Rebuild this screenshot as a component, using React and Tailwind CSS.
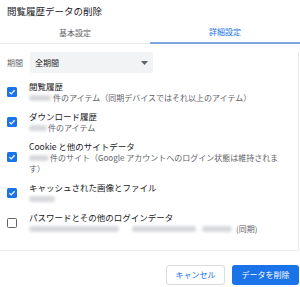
import React from "react";

const font = { fontFamily: '"Noto Sans CJK JP", "Noto Sans", sans-serif' };

const Blur = ({ w }) => (
  <span
    className={`inline-block h-[6px] rounded-full bg-[#d6d8db] blur-[1.5px] align-middle ${w}`}
  />
);

const Check = ({ on }) =>
  on ? (
    <span className="flex items-center justify-center w-[10px] h-[10px] rounded-[1.5px] bg-[#1a73e8] shrink-0">
      <svg width="8" height="8" viewBox="0 0 10 10">
        <path d="M1.8 5.2 L4 7.3 L8.3 2.8" fill="none" stroke="white" strokeWidth="1.6" />
      </svg>
    </span>
  ) : (
    <span className="w-[10px] h-[10px] rounded-[1.5px] border-[1.5px] border-[#5f6368] shrink-0" />
  );

const Row = ({ on, label, children }) => (
  <div className="flex items-center mt-[7px]">
    <div className="w-[22px] flex justify-start pl-[7px]">
      <Check on={on} />
    </div>
    <div className="ml-[7px]">
      <div className="h-[12px] leading-[12px] text-[8.5px] text-[#202124]">{label}</div>
      {children}
    </div>
  </div>
);

const Sub = ({ children }) => (
  <div className="h-[11px] leading-[11px] text-[8px] text-[#5f6368] whitespace-nowrap flex items-center">
    {children}
  </div>
);

export default function App() {
  return (
    <div className="w-[300px] h-[287px] bg-white overflow-hidden" style={font}>
      <div className="h-[22px] leading-[22px] pl-[7px] text-[9.5px] text-[#202124]">
        閲覧履歴データの削除
      </div>

      <div className="flex h-[22px] border-b border-[#e8eaed]">
        <div className="w-1/2 flex items-center justify-center text-[8px] text-[#5f6368]">
          基本設定
        </div>
        <div className="w-1/2 flex items-center justify-center text-[8px] text-[#1a73e8] border-b-2 border-[#7fa7e0] -mb-px">
          詳細設定
        </div>
      </div>

      <div className="w-[299px] h-[199px] border-r border-b border-[#e8eaed]">
        <div className="flex items-center mt-[8px] h-[21px]">
          <span className="pl-[7px] w-[30px] text-[8px] text-[#5f6368]">期間</span>
          <div className="w-[123px] h-[21px] bg-[#f1f3f4] rounded-[2px] flex items-center justify-between pl-[5px] pr-[5px] text-[8px] text-[#202124]">
            <span>全期間</span>
            <svg width="7" height="4" viewBox="0 0 7 4">
              <path d="M0 0 L7 0 L3.5 4 Z" fill="#5f6368" />
            </svg>
          </div>
        </div>

        <div className="mt-[4px]">
          <Row on label="閲覧履歴">
            <Sub>
              <Blur w="w-[22px]" />
              <span className="ml-[2px]">件のアイテム（同期デバイスではそれ以上のアイテム）</span>
            </Sub>
          </Row>
          <Row on label="ダウンロード履歴">
            <Sub>
              <Blur w="w-[18px]" />
              <span className="ml-[1px]">件のアイテム</span>
            </Sub>
          </Row>
          <Row on label="Cookie と他のサイトデータ">
            <Sub>
              <Blur w="w-[20px]" />
              <span className="ml-[1px]">件のサイト（Google アカウントへのログイン状態は維持されま</span>
            </Sub>
            <Sub>す）</Sub>
          </Row>
          <Row on label="キャッシュされた画像とファイル">
            <Sub>
              <Blur w="w-[26px]" />
            </Sub>
          </Row>
          <Row on={false} label="パスワードとその他のログインデータ">
            <Sub>
              <Blur w="w-[90px]" />
              <span className="ml-[13px]" />
              <Blur w="w-[64px]" />
              <span className="ml-[6px]" />
              <Blur w="w-[30px]" />
              <span className="ml-[4px]">(同期)</span>
            </Sub>
          </Row>
        </div>
      </div>

      <div className="flex justify-end gap-[7px] pt-[14px] pr-[1px]">
        <button className="w-[59px] h-[20px] rounded-[3px] border border-[#dadce0] bg-white text-[8px] text-[#1a73e8]">
          キャンセル
        </button>
        <button className="w-[67px] h-[20px] rounded-[3px] bg-[#1a73e8] text-[8px] text-white">
          データを削除
        </button>
      </div>
    </div>
  );
}
